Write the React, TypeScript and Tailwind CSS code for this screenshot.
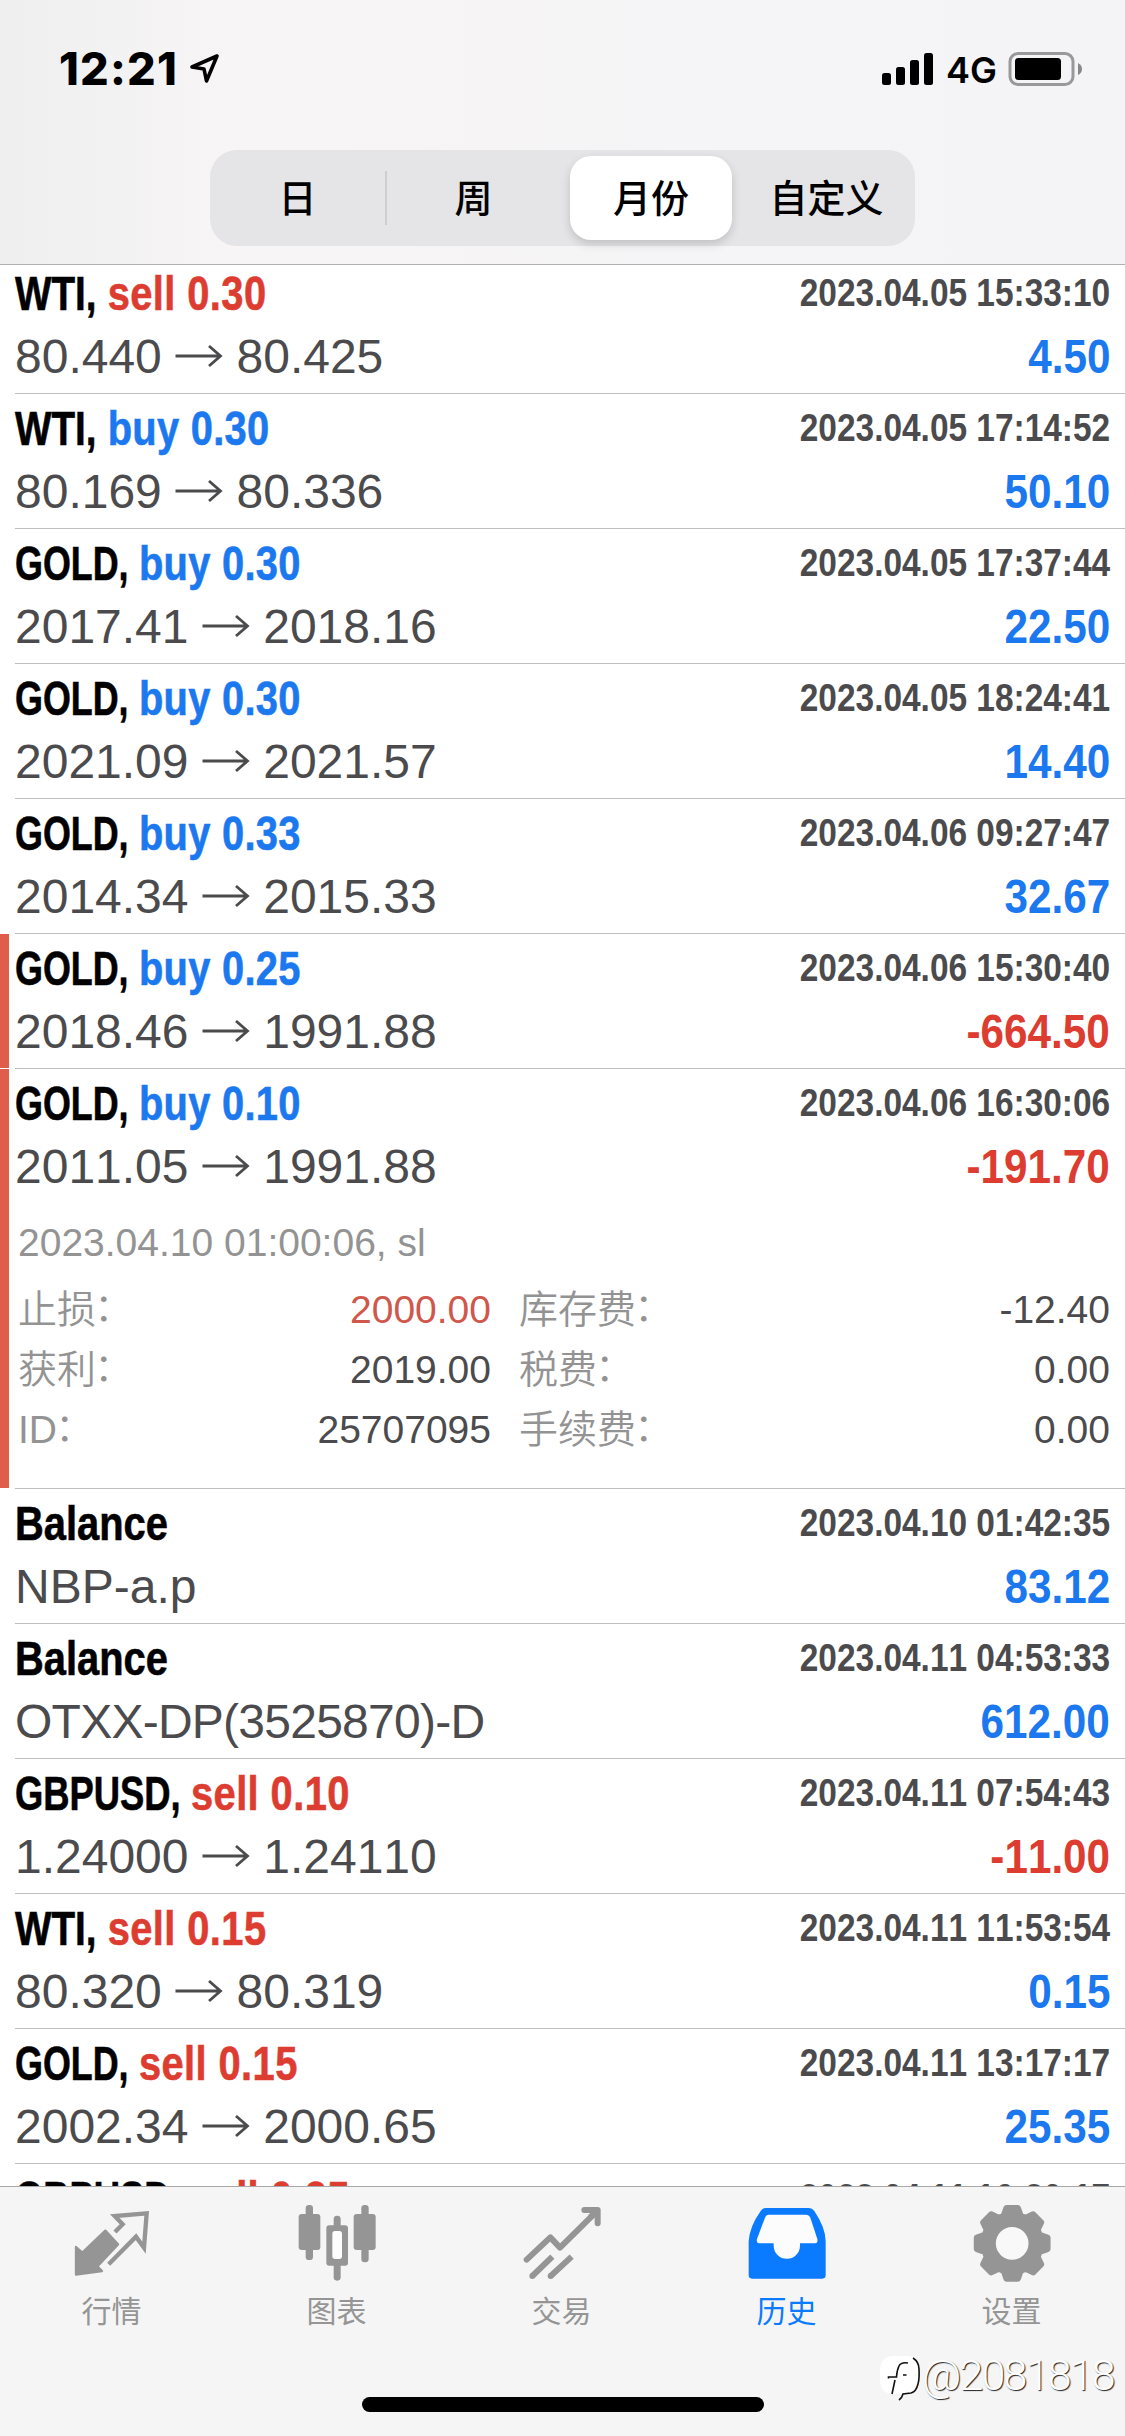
import type { ReactNode } from "react";

interface Deal {
  symbol: string;
  side?: "buy" | "sell";
  volume?: string;
  time: string;
  from?: string;
  to?: string;
  note?: string;
  profit: string;
  marked?: boolean;
  expanded?: boolean;
}

const DEALS: Deal[] = [
  { symbol: "WTI", side: "sell", volume: "0.30", time: "2023.04.05 15:33:10", from: "80.440", to: "80.425", profit: "4.50" },
  { symbol: "WTI", side: "buy", volume: "0.30", time: "2023.04.05 17:14:52", from: "80.169", to: "80.336", profit: "50.10" },
  { symbol: "GOLD", side: "buy", volume: "0.30", time: "2023.04.05 17:37:44", from: "2017.41", to: "2018.16", profit: "22.50" },
  { symbol: "GOLD", side: "buy", volume: "0.30", time: "2023.04.05 18:24:41", from: "2021.09", to: "2021.57", profit: "14.40" },
  { symbol: "GOLD", side: "buy", volume: "0.33", time: "2023.04.06 09:27:47", from: "2014.34", to: "2015.33", profit: "32.67" },
  { symbol: "GOLD", side: "buy", volume: "0.25", time: "2023.04.06 15:30:40", from: "2018.46", to: "1991.88", profit: "-664.50", marked: true },
  { symbol: "GOLD", side: "buy", volume: "0.10", time: "2023.04.06 16:30:06", from: "2011.05", to: "1991.88", profit: "-191.70", marked: true, expanded: true },
  { symbol: "Balance", time: "2023.04.10 01:42:35", note: "NBP-a.p", profit: "83.12" },
  { symbol: "Balance", time: "2023.04.11 04:53:33", note: "OTXX-DP(3525870)-D", profit: "612.00" },
  { symbol: "GBPUSD", side: "sell", volume: "0.10", time: "2023.04.11 07:54:43", from: "1.24000", to: "1.24110", profit: "-11.00" },
  { symbol: "WTI", side: "sell", volume: "0.15", time: "2023.04.11 11:53:54", from: "80.320", to: "80.319", profit: "0.15" },
  { symbol: "GOLD", side: "sell", volume: "0.15", time: "2023.04.11 13:17:17", from: "2002.34", to: "2000.65", profit: "25.35" },
  { symbol: "GBPUSD", side: "sell", volume: "0.25", time: "2023.04.11 16:30:17", from: "1.24210", to: "1.24105", profit: "5.25" },
];

const SYMBOL_FIT: Record<string, string> = {
  WTI: "inline-block origin-left scale-x-[0.97] -mr-[3px]",
  GOLD: "inline-block origin-left scale-x-[0.9] -mr-[16px]",
  GBPUSD: "inline-block origin-left scale-x-[0.913] -mr-[20px]",
  Balance: "inline-block",
};

function StatusBar() {
  return (
    <div className="flex h-[138px] items-start justify-between pr-[42px] pl-[59px]">
      <div className="flex items-start pt-[41px]">
        <span className="font-['Inter'] text-[45px] leading-[56px] font-extrabold tracking-[1.200px]">12:21</span>
        <svg className="mt-[12px] ml-[11px] h-[32px] w-[32px]" viewBox="0 0 32 32" fill="none">
          <path d="M28 3 L3 14 L15 16 L17.500 28 Z" stroke="#000" strokeWidth="3.600" strokeLinejoin="round" />
        </svg>
      </div>
      <div className="flex items-start">
        <svg className="mt-[52px] h-[34px] w-[52px]" viewBox="0 0 52 34">
          <rect x="0" y="21" width="9" height="12" rx="2.500" />
          <rect x="14" y="15" width="9" height="18" rx="2.500" />
          <rect x="28" y="8" width="9" height="25" rx="2.500" />
          <rect x="42" y="1" width="9" height="32" rx="2.500" />
        </svg>
        <span className="mt-[48px] ml-[12px] w-[50px] font-['Inter'] text-[36px] leading-[44px] font-semibold">4G</span>
        <svg className="mt-[51px] ml-[12px] h-[36px] w-[75px]" viewBox="0 0 75 36">
          <rect x="2" y="2.500" width="63" height="31" rx="8" fill="none" stroke="#999" strokeWidth="3" />
          <rect x="7" y="7" width="46" height="22" rx="3.500" />
          <path d="M70 12 Q74 14 74 18 Q74 22 70 24 Z" fill="#888" />
        </svg>
      </div>
    </div>
  );
}

function PeriodPicker() {
  return (
    <div className="mx-auto mt-[12px] flex h-[96px] w-[705px] items-center rounded-[27px] bg-[#e5e4e6] font-['Noto_Sans_CJK_SC',sans-serif] text-[38px] font-medium">
      <div className="w-[175px] pb-[6px] text-center">日</div>
      <div className="h-[54px] w-[2px] bg-[#cfced1]" />
      <div className="w-[177px] pr-[4px] pb-[6px] text-center">周</div>
      <div className="mx-[6px] flex h-[84px] w-[162px] items-center justify-center rounded-[21px] bg-white pb-[6px] shadow-[0_4px_10px_rgba(0,0,0,0.16)]">
        月份
      </div>
      <div className="flex-1 pb-[6px] text-center">自定义</div>
    </div>
  );
}

function Arrow() {
  return (
    <svg className="inline-block h-[24px] w-[48px] align-[5px]" viewBox="0 0 48 24" fill="none" stroke="#4b4b4d" strokeWidth="2.800">
      <path d="M0.500 12 H45 M34 2 L45.500 12 L34 22" />
    </svg>
  );
}

function Details() {
  return (
    <div className="pt-[16px] pl-[3px] text-[39px] leading-[60px] text-[#4b4b4d]">
      <div className="text-[#939393]">2023.04.10 01:00:06, sl</div>
      <div className="grid grid-cols-[473px_1fr] gap-x-[28px] pt-[7px]">
        <DetailLine label="止损" value={<span className="text-[#d0574b]">2000.00</span>} />
        <DetailLine label="库存费" value="-12.40" />
        <DetailLine label="获利" value="2019.00" />
        <DetailLine label="税费" value="0.00" />
        <DetailLine label="ID" value="25707095" />
        <DetailLine label="手续费" value="0.00" />
      </div>
    </div>
  );
}

function DetailLine({ label, value }: { label: string; value: ReactNode }) {
  return (
    <div className="flex h-[60px] justify-between">
      <span className="font-['Liberation_Sans','Noto_Sans_CJK_SC',sans-serif] font-[350] text-[#939393]">
        {label}
        <span className="-ml-[2px] align-[2px] leading-none">：</span>
      </span>
      <span>{value}</span>
    </div>
  );
}

function DealRow({ deal }: { deal: Deal }) {
  return (
    <div className={deal.expanded ? "flex h-[420px] shrink-0" : "flex h-[135px] shrink-0"}>
      <div className={deal.marked ? "mb-px w-[9px] bg-[#e05c4b]" : "w-[9px]"} />
      <div className="ml-[6px] flex-1 border-b border-[#bfbfc1] pr-[15px]">
        <div className="flex h-[72px] justify-between pt-[6px] font-bold whitespace-pre">
          <div className="origin-left scale-x-[0.83] text-[48px] leading-[58px] [-webkit-text-stroke:0.6px]">
            <span className={SYMBOL_FIT[deal.symbol]}>{deal.side ? `${deal.symbol}, ` : deal.symbol}</span>
            {deal.side && (
              <span className={deal.side === "buy" ? "tracking-[0.350px] text-[#1b78ee]" : "tracking-[0.500px] text-[#dd3c30]"}>
                {deal.side} {deal.volume}
              </span>
            )}
          </div>
          <div className="origin-right scale-x-[0.857] text-[39px] leading-[56px] text-[#4b4b4d]">{deal.time}</div>
        </div>
        <div className="flex h-[56px] justify-between text-[48px] leading-[52px] whitespace-nowrap">
          <div className={deal.note && deal.note.length > 10 ? "tracking-[-0.750px] text-[#4b4b4d]" : "text-[#4b4b4d]"}>
            {deal.note ?? (
              <>
                {deal.from} <Arrow /> {deal.to}
              </>
            )}
          </div>
          <div
            className={
              deal.profit.startsWith("-")
                ? "origin-right scale-x-[0.88] font-bold text-[#dd3c30]"
                : "origin-right scale-x-[0.88] font-bold text-[#1b78ee]"
            }
          >
            {deal.profit}
          </div>
        </div>
        {deal.expanded && <Details />}
      </div>
    </div>
  );
}

function QuotesIcon() {
  return (
    <svg className="h-[80px] w-[80px]" viewBox="0 0 240 240">
      <path d="M12 132 L31 149 L100 83 L138 124 L76 190 L90 204 L12 215 Z" fill="currentColor" stroke="currentColor" strokeWidth="7" strokeLinejoin="round" />
      <path d="M129 87 L152 64 L128 39 L224 31 L216 134 L192 101 L110 184" fill="none" stroke="currentColor" strokeWidth="13" />
    </svg>
  );
}

function ChartIcon() {
  return (
    <svg className="h-[80px] w-[80px]" viewBox="0 0 240 240" fill="currentColor">
      <rect x="26" y="6" width="22" height="165" rx="10" />
      <rect x="5" y="33" width="65" height="108" rx="9" />
      <rect x="110" y="38" width="21" height="60" rx="10" />
      <rect x="110" y="170" width="21" height="63" rx="10" />
      <rect x="88" y="67" width="65" height="121" rx="9" />
      <rect x="106" y="84" width="29" height="84" rx="8" fill="#fdfdfd" />
      <rect x="193" y="6" width="22" height="172" rx="10" />
      <rect x="170" y="33" width="66" height="108" rx="9" />
    </svg>
  );
}

function TradeIcon() {
  return (
    <svg className="h-[80px] w-[80px]" viewBox="0 0 240 240" fill="none" stroke="currentColor" strokeWidth="18" strokeLinejoin="round">
      <path d="M14 170 L85 103 L114 134 L224 25" strokeLinecap="round" />
      <path d="M187 21 H227 V61" strokeLinecap="round" />
      <path d="M205 30 L218 43" />
      <path d="M31 219 L91 161 M86 219 L149 161" />
      <path d="M31 219 v0.100 M86 219 v0.100" strokeLinecap="round" />
    </svg>
  );
}

function HistoryIcon() {
  return (
    <svg className="h-[80px] w-[80px]" viewBox="0 0 240 240" fill="currentColor">
      <path d="M57 15 H186 Q196 15 202 24 Q236 75 236 115 V217 Q236 227 226 227 H15 Q5 227 5 217 V115 Q8 70 41 24 Q47 15 57 15 Z" />
      <path
        fill="#fcfcfc"
        d="M65 35 H176 Q186 35 190 44 L211 108 Q214 120 204 121 H159 V128 A39.500 39.500 0 0 1 80 128 V121 H37 Q27 120 30 108 L54 44 Q57 35 65 35 Z"
      />
    </svg>
  );
}

// Eight teeth, four corner points each.
const GEAR_POINTS = Array.from({ length: 8 }, (_, i) =>
  [
    [-17, 86],
    [-9, 107],
    [9, 107],
    [17, 86],
  ]
    .map(([deg, r]) => {
      const a = ((i * 45 + deg) * Math.PI) / 180;
      return `${(120.5 + r * Math.sin(a)).toFixed(1)},${(121 - r * Math.cos(a)).toFixed(1)}`;
    })
    .join(" "),
).join(" ");

function SettingsIcon() {
  return (
    <svg className="h-[80px] w-[80px]" viewBox="0 0 240 240">
      <polygon points={GEAR_POINTS} fill="currentColor" stroke="currentColor" strokeWidth="19" strokeLinejoin="round" />
      <circle cx="120.500" cy="121" r="49" fill="#f8f8f8" />
    </svg>
  );
}

const TABS = [
  { label: "行情", icon: <QuotesIcon /> },
  { label: "图表", icon: <ChartIcon /> },
  { label: "交易", icon: <TradeIcon /> },
  { label: "历史", icon: <HistoryIcon />, active: true },
  { label: "设置", icon: <SettingsIcon /> },
];

function TabBar() {
  return (
    <div className="relative h-[250px] border-t border-[#a9a9a9] bg-[#f5f5f5]">
      <div className="-ml-px flex pt-[16px]">
        {TABS.map((tab) => (
          <div
            key={tab.label}
            className={tab.active ? "flex w-[225px] flex-col items-center text-[#0a7aff]" : "flex w-[225px] flex-col items-center text-[#959595]"}
          >
            {tab.icon}
            <div className="mt-[6px] mb-[2px] font-['Noto_Sans_CJK_SC',sans-serif] text-[30px] leading-[40px]">{tab.label}</div>
          </div>
        ))}
      </div>
      <div className="mx-auto mt-[66px] h-[15px] w-[402px] rounded-full bg-black" />
      <Watermark />
    </div>
  );
}

function Watermark() {
  return (
    <div className="absolute top-[168px] left-[880px] flex items-start">
      <svg className="h-[48px] w-[42px] shrink-0" viewBox="0 0 42 48" fill="none">
        <path d="M12 1 H28 Q38 2 39 14 V26 Q38 37 28 39 H12 Q1 38 0 26 V14 Q1 2 12 1 Z" fill="#fff" />
        <path d="M33 3 Q39 7 39 14 Q39.500 24 38 29 Q36 37 31 38 L23 39 Q22 43 19 45" stroke="#111" strokeWidth="1.600" />
        <path d="M28 8 Q21 7 19 11 Q17 15 16.500 22 H8.500 V23.500 M15 25 L12 39 M23 20 H26.500" stroke="#111" strokeWidth="1.600" />
      </svg>
      <span className="-mt-[4px] font-['Roboto'] text-[43px] leading-[48px] font-light tracking-[-1.800px] text-white [text-shadow:1px_1px_1px_#222]">
        @2081818
      </span>
    </div>
  );
}

export default function App() {
  return (
    <div className="flex h-[2436px] w-[1125px] flex-col overflow-hidden bg-white font-['Liberation_Sans'] text-black [font-kerning:none]">
      <div className="h-[265px] shrink-0 border-b border-[#b0b0b2] bg-linear-to-r from-[#efeff0] via-[#f7f5f5] via-20% to-[#f4f4f7]">
        <StatusBar />
        <PeriodPicker />
      </div>
      <div className="-mt-[6px] flex h-[1927px] shrink-0 flex-col overflow-hidden">
        {DEALS.map((deal) => (
          <DealRow key={deal.time} deal={deal} />
        ))}
      </div>
      <TabBar />
    </div>
  );
}
